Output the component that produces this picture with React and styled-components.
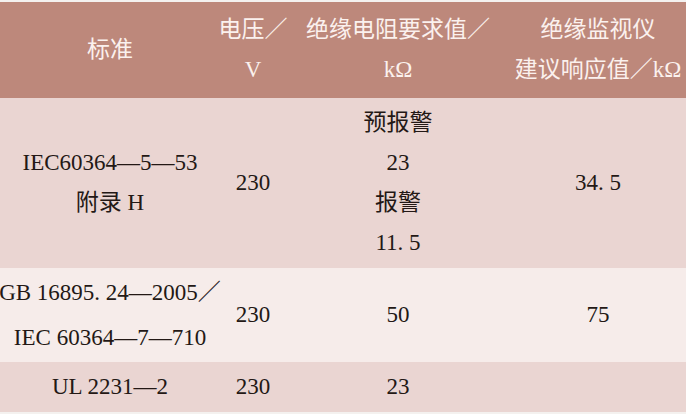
import styled, { createGlobalStyle } from "styled-components";

const GlobalStyle = createGlobalStyle`
  html, body {
    margin: 0;
    padding: 0;
    background: #f4f1ef;
  }
`;

const headerColor = "#bd887b";
const darkRow = "#ead5d2";
const lightRow = "#f6ecea";

const Table = styled.div`
  width: 686px;
  padding: 2px 0;
  font-family: "Liberation Serif", "Noto Sans CJK SC", serif;
  font-size: 23px;
`;

const Row = styled.div`
  display: grid;
  grid-template-columns: 220px 66px 224px 1fr;
  height: ${(p) => p.$h}px;
  background: ${(p) => p.$bg};
  color: ${(p) => (p.$head ? "#fbf1ee" : "#231815")};
`;

const Cell = styled.div`
  display: flex;
  flex-direction: column;
  align-items: center;
  justify-content: center;
  text-align: center;
  white-space: nowrap;
  line-height: ${(p) => p.$lh || 40}px;
`;

const Line = styled.span`
  display: block;
`;

const App = () => {
  return (
    <>
      <GlobalStyle />
      <Table>
        <Row $h={96} $bg={headerColor} $head>
          <Cell>标准</Cell>
          <Cell>
            <Line>电压／</Line>
            <Line>V</Line>
          </Cell>
          <Cell>
            <Line>绝缘电阻要求值／</Line>
            <Line>kΩ</Line>
          </Cell>
          <Cell>
            <Line>绝缘监视仪</Line>
            <Line>建议响应值／kΩ</Line>
          </Cell>
        </Row>
        <Row $h={170} $bg={darkRow}>
          <Cell>
            <Line>IEC60364—5—53</Line>
            <Line>附录 H</Line>
          </Cell>
          <Cell>230</Cell>
          <Cell>
            <Line>预报警</Line>
            <Line>23</Line>
            <Line>报警</Line>
            <Line>11. 5</Line>
          </Cell>
          <Cell>34. 5</Cell>
        </Row>
        <Row $h={94} $bg={lightRow}>
          <Cell $lh={45}>
            <Line>GB 16895. 24—2005／</Line>
            <Line>IEC 60364—7—710</Line>
          </Cell>
          <Cell>230</Cell>
          <Cell>50</Cell>
          <Cell>75</Cell>
        </Row>
        <Row $h={50} $bg={darkRow}>
          <Cell>UL 2231—2</Cell>
          <Cell>230</Cell>
          <Cell>23</Cell>
          <Cell />
        </Row>
      </Table>
    </>
  );
};

export default App;
